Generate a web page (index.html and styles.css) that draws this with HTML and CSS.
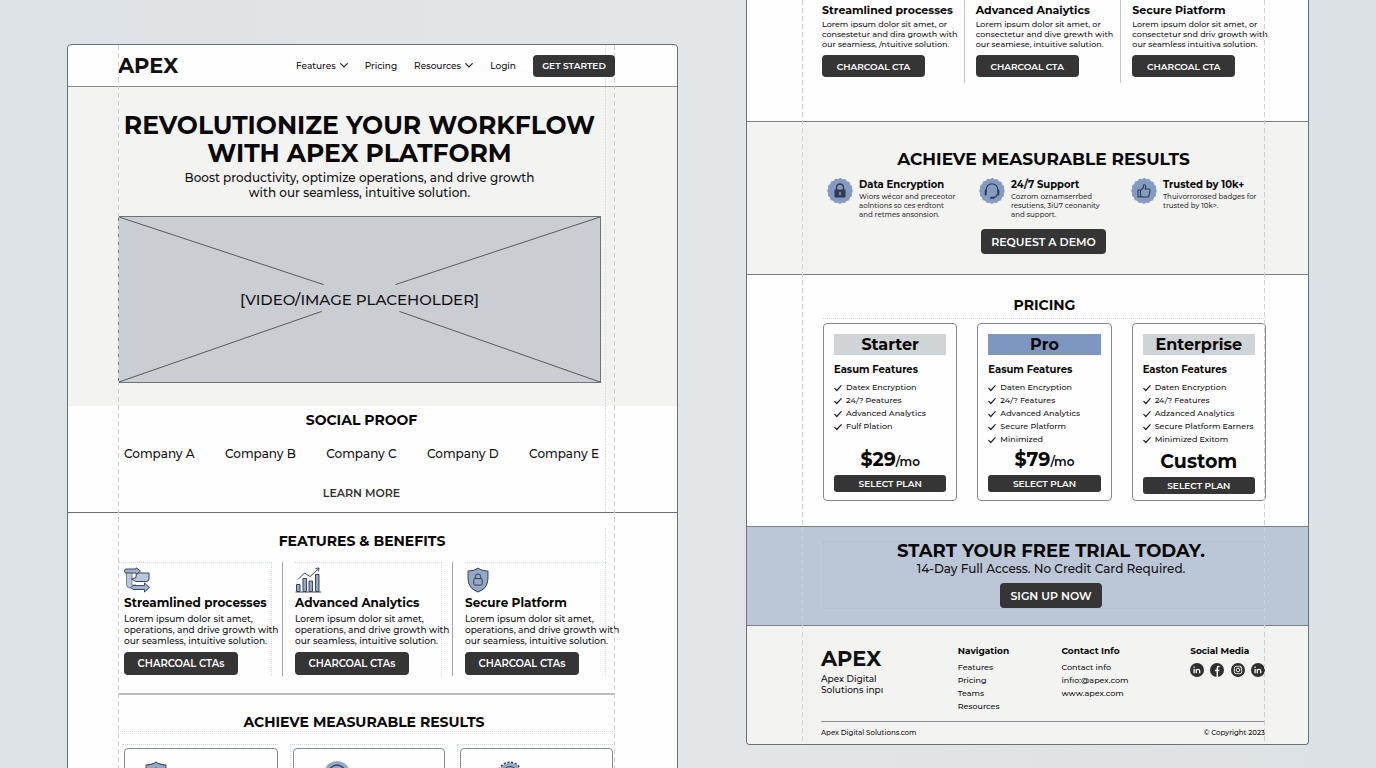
FILE: index.html
```html
<!DOCTYPE html>
<html lang="en">
<head>
    <meta charset="UTF-8">
    <meta name="viewport" content="width=device-width, initial-scale=1.0">
    <title>Apex Platform</title>
    <link rel="stylesheet" href="styles.css">
</head>
<body>
    <!-- Shared icon shapes -->
    <svg class="sprite" aria-hidden="true">
        <symbol id="chevron" viewBox="0 0 8 5"><path d="M.7.7 4 4 7.3.7" fill="none" stroke="#222" stroke-width="1.2" stroke-linecap="round"/></symbol>
        <symbol id="check" viewBox="0 0 8 8"><path d="M.8 4.4 2.8 6.5 7.2 1.6" fill="none" stroke="#222" stroke-width="1.2" stroke-linecap="round"/></symbol>
        <symbol id="badge" viewBox="0 0 26 26">
            <circle cx="13" cy="13" r="12" fill="#849bc2"/>
            <circle cx="13" cy="13" r="10.8" fill="none" stroke="#849bc2" stroke-width="4.200" stroke-linecap="round" stroke-dasharray="0 4.24"/>
        </symbol>
        <symbol id="shield" viewBox="0 0 24 28">
            <path d="M12 1.2C9 3.4 5.500 4.300 1.300 4.300V12.500C1.300 19.500 5 24.500 12 27 19 24.500 22.700 19.500 22.700 12.500V4.300C18.500 4.300 15 3.400 12 1.200Z" fill="#94a9ca" stroke="#3c4758" stroke-width="1.1"/>
            <rect x="7.500" y="12.500" width="9" height="7" rx="1" fill="none" stroke="#2c3544" stroke-width="1"/>
            <path d="M9 12.500V10.500a3 3 0 0 1 6 0V12.500" fill="none" stroke="#2c3544" stroke-width="1"/>
        </symbol>
        <symbol id="linkedin" viewBox="0 0 14 14">
            <circle cx="7" cy="7" r="7" fill="#2f2f2f"/>
            <path d="M4.100 6v4.200M6.300 6v4.200M6.300 8q0-1.700 1.700-1.700t1.700 1.700v2.200" fill="none" stroke="#fff" stroke-width="1.300"/>
            <circle cx="4.100" cy="4.200" r=".8" fill="#fff"/>
        </symbol>
    </svg>

    <div class="board">
        <!-- First page -->
        <div class="page page-left">
            <div class="guide guide-start"></div>
            <div class="guide guide-inner"></div>
            <div class="guide guide-inner guide-inner-low"></div>
            <div class="guide guide-end"></div>

            <header class="header">
                <a class="logo" href="#">APEX</a>
                <nav class="nav">
                    <a href="#">Features <svg class="chevron"><use href="#chevron"/></svg></a>
                    <a href="#">Pricing</a>
                    <a href="#">Resources <svg class="chevron"><use href="#chevron"/></svg></a>
                    <a href="#">Login</a>
                    <button class="btn btn-nav">GET STARTED</button>
                </nav>
            </header>

            <section class="hero">
                <h1>REVOLUTIONIZE YOUR WORKFLOW<br>WITH APEX PLATFORM</h1>
                <p>Boost productivity, optimize operations, and drive growth<br>with our seamless, intuitive solution.</p>
                <div class="placeholder">
                    <svg viewBox="0 0 482 166" preserveAspectRatio="none" aria-hidden="true">
                        <path d="M0 0 205 68M277 68 482 0M0 166 203 95M281 95 482 166" fill="none" stroke="#55595d" stroke-width="1"/>
                    </svg>
                    <span>[VIDEO/IMAGE PLACEHOLDER]</span>
                </div>
            </section>

            <section class="proof">
                <h2>SOCIAL PROOF</h2>
                <div class="companies">
                    <span>Company A</span>
                    <span>Company B</span>
                    <span>Company C</span>
                    <span>Company D</span>
                    <span>Company E</span>
                </div>
                <a class="learn-more" href="#">LEARN MORE</a>
            </section>

            <section class="features">
                <h2>FEATURES &amp; BENEFITS</h2>
                <div class="feature-row">
                    <div class="feature">
                        <div class="feature-body">
                            <svg class="feature-icon" viewBox="0 0 26 26" aria-hidden="true">
                                <g fill="#9fb2cf" stroke="#3c4758" stroke-width="1" stroke-linejoin="round">
                                    <path d="M2.500 5H8V18H12V21H6Q2.500 21 2.500 17V5Z" fill="#b9c6db" stroke-width=".6"/>
                                    <path d="M2 2H12V.800L16.500 4 12 7.500V6H2Q.500 6 .500 4T2 2Z"/>
                                    <path d="M25 6H15Q12 6 12 9V10.500L7.500 12 12 14.500H22Q25 14.500 25 12Z" fill="#b9c6db"/>
                                    <path d="M9 18.500H20.500V16L25.500 20.500 20.500 25V22.500H9L7 20.500Z"/>
                                </g>
                            </svg>
                            <h3>Streamlined processes</h3>
                            <p>Lorem ipsum dolor sit amet,<br>operations, and drive growth with<br>our seamless, intuitive solution.</p>
                            <button class="btn btn-card">CHARCOAL CTAs</button>
                        </div>
                    </div>
                    <div class="feature">
                        <div class="feature-body">
                            <svg class="feature-icon" viewBox="0 0 26 26" aria-hidden="true">
                                <path d="M1.500 17.500H5V24.500H1.500ZM8 11.500H11.500V24.500H8ZM14 14H17.500V24.500H14ZM20.500 7.500H24V24.500H20.500Z" fill="#94a9ca" stroke="#3c4758"/>
                                <path d="M.500 25H26M3 12.500 9.500 6 15 9.500 23.500 1.800M20.500 1.500 24 1 23.500 4.500" fill="none" stroke="#3c4758"/>
                            </svg>
                            <h3>Advanced Analytics</h3>
                            <p>Lorem ipsum dolor sit amet,<br>operations, and drive growth with<br>our seamless, intuitive solution.</p>
                            <button class="btn btn-card">CHARCOAL CTAs</button>
                        </div>
                    </div>
                    <div class="feature">
                        <div class="feature-body">
                            <svg class="feature-icon" aria-hidden="true"><use href="#shield"/></svg>
                            <h3>Secure Platform</h3>
                            <p>Lorem ipsum dolor sit amet,<br>operations, and drive growth with<br>our seamiess, intuitive solution.</p>
                            <button class="btn btn-card">CHARCOAL CTAs</button>
                        </div>
                    </div>
                </div>
            </section>

            <section class="results-preview">
                <h2>ACHIEVE MEASURABLE RESULTS</h2>
                <div class="preview-row">
                    <div class="preview-cell">
                        <div class="preview-card"><svg class="preview-icon" aria-hidden="true"><use href="#shield"/></svg></div>
                    </div>
                    <div class="preview-cell">
                        <div class="preview-card preview-card-mid">
                            <svg class="preview-icon" viewBox="0 0 26 26" aria-hidden="true">
                                <circle cx="13" cy="13" r="13" fill="#94a9ca"/>
                                <path d="M5 14V12a8 8 0 0 1 16 0v2" fill="none" stroke="#3c4758" stroke-width="1.500"/>
                            </svg>
                        </div>
                    </div>
                    <div class="preview-cell">
                        <div class="preview-card preview-card-end">
                            <svg class="preview-icon" viewBox="0 0 26 26" aria-hidden="true">
                                <circle cx="13" cy="13" r="11" fill="#94a9ca" stroke="#3c4758" stroke-width="3" stroke-dasharray="2 1.500"/>
                                <circle cx="13" cy="13" r="11" fill="#94a9ca"/>
                                <circle cx="13" cy="13" r="7.500" fill="none" stroke="#3c4758"/>
                            </svg>
                        </div>
                    </div>
                </div>
            </section>
        </div>

        <!-- Second page -->
        <div class="page page-right">
            <div class="guide guide-start"></div>
            <div class="guide guide-end"></div>

            <section class="columns">
                <div class="column">
                    <h3>Streamlined processes</h3>
                    <p>Lorem ipsum dolor sit amet, or<br>consestetur and dira growth with<br>our seamiess, /ntuitive solution.</p>
                    <button class="btn btn-column">CHARCOAL CTA</button>
                </div>
                <div class="column">
                    <h3>Advanced Anaiytics</h3>
                    <p>Lorem ipsum dolor sit amet, or<br>consectetur and dive grewth with<br>our seamiese, intuitive salution.</p>
                    <button class="btn btn-column">CHARCOAL CTA</button>
                </div>
                <div class="column">
                    <h3>Secure Piatform</h3>
                    <p>Lorem ipsum dolor sit amet, or<br>consectetur snd driv growth with<br>our seamless intuitiva solution.</p>
                    <button class="btn btn-column">CHARCOAL CTA</button>
                </div>
            </section>

            <section class="results">
                <h2>ACHIEVE MEASURABLE RESULTS</h2>
                <div class="result-row">
                    <div class="result">
                        <svg class="badge" viewBox="0 0 26 26" aria-hidden="true">
                            <use href="#badge"/>
                            <rect x="7.500" y="11.500" width="11" height="8" rx="1" fill="#303a4c"/>
                            <path d="M9.500 12V9.500a3.500 3.500 0 0 1 7 0V12" fill="none" stroke="#303a4c" stroke-width="1.400"/>
                            <path d="M13 14v3" stroke="#a9b9d4" stroke-width="1.200"/>
                        </svg>
                        <div>
                            <h3>Data Encryption</h3>
                            <p>Wiors wécor and preceotor<br>aolntions so ces erdtont<br>and retmes ansonsion.</p>
                        </div>
                    </div>
                    <div class="result">
                        <svg class="badge" viewBox="0 0 26 26" aria-hidden="true">
                            <use href="#badge"/>
                            <path d="M7.300 13.500V11.500a5.700 5.700 0 0 1 11.400 0v2M18.500 16q-1 3.300-4.500 3.600" fill="none" stroke="#303a4c" stroke-width="1.100"/>
                            <path d="M6.700 12.500v4M19.300 12.500v4M12 19.800h3" fill="none" stroke="#303a4c" stroke-width="2" stroke-linecap="round"/>
                        </svg>
                        <div>
                            <h3>24/7 Support</h3>
                            <p>Cozrom oznamserrbed<br>resutiens, 3iU7 ceonanity<br>and support.</p>
                        </div>
                    </div>
                    <div class="result">
                        <svg class="badge" viewBox="0 0 26 26" aria-hidden="true">
                            <use href="#badge"/>
                            <path d="M7 12h2.500v7H7ZM9.500 12.500 12.500 9.500V7q1.800-.700 2.300 1.200L14.200 11H18q1.300.200 1 1.600l-1 5q-.300 1.400-1.500 1.400h-5l-2-.800" fill="none" stroke="#303a4c" stroke-width="1.100" stroke-linejoin="round"/>
                        </svg>
                        <div>
                            <h3>Trusted by 10k+</h3>
                            <p>Thuivorrorosed badges for<br>trusted by 10k&gt;.</p>
                        </div>
                    </div>
                </div>
                <button class="btn btn-large">REQUEST A DEMO</button>
            </section>

            <section class="pricing">
                <h2>PRICING</h2>
                <div class="plans">
                    <div class="plan">
                        <h3>Starter</h3>
                        <h4>Easum Features</h4>
                        <ul>
                            <li><svg><use href="#check"/></svg>Datex Encryption</li>
                            <li><svg><use href="#check"/></svg>24/? Peatures</li>
                            <li><svg><use href="#check"/></svg>Advanced Analytics</li>
                            <li><svg><use href="#check"/></svg>Fulf Plation</li>
                        </ul>
                        <div class="price">$29<small>/mo</small></div>
                        <button class="btn btn-plan">SELECT PLAN</button>
                    </div>
                    <div class="plan plan-pro">
                        <h3>Pro</h3>
                        <h4>Easum Features</h4>
                        <ul>
                            <li><svg><use href="#check"/></svg>Daten Encryption</li>
                            <li><svg><use href="#check"/></svg>24/? Features</li>
                            <li><svg><use href="#check"/></svg>Advanced Analytics</li>
                            <li><svg><use href="#check"/></svg>Secure Platform</li>
                            <li><svg><use href="#check"/></svg>Minimized</li>
                        </ul>
                        <div class="price">$79<small>/mo</small></div>
                        <button class="btn btn-plan">SELECT PLAN</button>
                    </div>
                    <div class="plan plan-custom">
                        <h3>Enterprise</h3>
                        <h4>Easton Features</h4>
                        <ul>
                            <li><svg><use href="#check"/></svg>Daten Encryption</li>
                            <li><svg><use href="#check"/></svg>24/? Features</li>
                            <li><svg><use href="#check"/></svg>Adzanced Analytics</li>
                            <li><svg><use href="#check"/></svg>Secure Platform Earners</li>
                            <li><svg><use href="#check"/></svg>Minimized Exitom</li>
                        </ul>
                        <div class="price">Custom</div>
                        <button class="btn btn-plan">SELECT PLAN</button>
                    </div>
                </div>
            </section>

            <section class="trial">
                <div class="trial-box">
                    <h2>START YOUR FREE TRIAL TODAY.</h2>
                    <p>14-Day Full Access. No Credit Card Required.</p>
                    <button class="btn btn-large">SIGN UP NOW</button>
                </div>
            </section>

            <footer class="footer">
                <div class="footer-row">
                    <div>
                        <a class="logo" href="#">APEX</a>
                        <p>Apex Digital<br>Solutions inpı</p>
                    </div>
                    <div class="footer-links">
                        <h4>Navigation</h4>
                        <a href="#">Features</a>
                        <a href="#">Pricing</a>
                        <a href="#">Teams</a>
                        <a href="#">Resources</a>
                    </div>
                    <div class="footer-links">
                        <h4>Contact Info</h4>
                        <a href="#">Contact info</a>
                        <a href="#">infıo:@apex.com</a>
                        <a href="#">www.apex.com</a>
                    </div>
                    <div>
                        <h4>Social Media</h4>
                        <div class="social">
                            <a href="#" aria-label="LinkedIn"><svg><use href="#linkedin"/></svg></a>
                            <a href="#" aria-label="Facebook">
                                <svg viewBox="0 0 14 14"><circle cx="7" cy="7" r="7" fill="#2f2f2f"/><path d="M9.500 3.500H8.700Q7.300 3.500 7.300 5V14M5 7.500H9.300" fill="none" stroke="#fff" stroke-width="1.500"/></svg>
                            </a>
                            <a href="#" aria-label="Instagram">
                                <svg viewBox="0 0 14 14"><circle cx="7" cy="7" r="7" fill="#2f2f2f"/><rect x="3.300" y="3.300" width="7.400" height="7.400" rx="2" fill="none" stroke="#fff" stroke-width=".9"/><circle cx="7" cy="7" r="1.800" fill="none" stroke="#fff" stroke-width=".9"/><circle cx="9.200" cy="4.800" r=".5" fill="#fff"/></svg>
                            </a>
                            <a href="#" aria-label="LinkedIn"><svg><use href="#linkedin"/></svg></a>
                        </div>
                    </div>
                </div>
                <div class="footer-bottom">
                    <span>Apex Digital Solutions.com</span>
                    <span>© Copyright 2023</span>
                </div>
            </footer>
        </div>
    </div>
</body>
</html>
```
FILE: styles.css
```css
* {
    box-sizing: border-box;
}

body {
    margin: 0;
    font-family: Montserrat, Inter, "Open Sans", sans-serif;
    font-weight: 500;
    color: #111;
    background: linear-gradient(90deg, #dde2e6, #e2e6e9 50%, #dce1e5);
}

h1, h2, h3, h4, p, ul {
    margin: 0;
    padding: 0;
}

h1, h2, h3, h4 {
    font-weight: 700;
    color: #080808;
}

a {
    color: inherit;
    text-decoration: none;
}

svg {
    display: block;
}

.sprite {
    position: absolute;
    width: 0;
    height: 0;
}

.board {
    display: grid;
    grid-template-columns: minmax(0, 611fr) minmax(0, 563fr);
    gap: 68px;
    align-items: start;
    height: 100vh;
    padding: 0 67px;
    overflow: hidden;
}

.page {
    position: relative;
    background: #fefefe;
    border: 1px solid #6b7076;
    border-radius: 4px;
}

.page-left {
    margin-top: 44px;
}

.page-right {
    border-top: none;
    border-radius: 0 0 4px 4px;
}

.btn {
    position: relative;
    z-index: 1;
    display: block;
    padding: 0;
    border: none;
    border-radius: 4px;
    background: #353535;
    color: #fff;
    font-family: inherit;
    font-weight: 600;
    white-space: nowrap;
    cursor: pointer;
}

.btn:hover {
    background: #4a4a4a;
}

.logo {
    font-weight: 700;
    font-size: 21px;
    line-height: 26px;
}

/* Layout guides drawn over the pages */
.guide {
    position: absolute;
    top: 0;
    bottom: 0;
    width: 1px;
    background: repeating-linear-gradient(#cfd1d3 0 5px, transparent 5px 8px);
    pointer-events: none;
}

.page-left .guide-start { left: 50px; }
.page-left .guide-end { right: 62px; }
.page-right .guide-start { left: 55px; }
.page-right .guide-end { right: 43px; }

.page .guide-inner {
    right: 71px;
    bottom: auto;
    height: 467px;
    background: repeating-linear-gradient(#d3dce9 0 2px, transparent 2px 3px);
}

.page .guide-inner-low {
    top: 483px;
    height: 35px;
}

/* Header */
.header {
    display: flex;
    justify-content: space-between;
    align-items: center;
    height: 42px;
    padding: 0 62px 0 50px;
    border-bottom: 1px solid #8b8f93;
}

.nav {
    display: flex;
    align-items: center;
    gap: 17px;
    font-size: 9px;
}

.nav a {
    display: flex;
    align-items: center;
    gap: 4px;
}

.chevron {
    width: 8px;
    height: 5px;
}

.btn-nav {
    width: 82px;
    height: 22px;
    font-size: 9px;
}

/* Hero */
.hero {
    padding: 24px 76px 23px 50px;
    background: #f3f3f2;
    text-align: center;
}

.hero h1 {
    font-size: 25px;
    line-height: 28px;
    white-space: nowrap;
}

.hero p {
    margin: 3px 0 16px;
    font-size: 12px;
    line-height: 15px;
}

.placeholder {
    display: grid;
    height: 167px;
    border: 1px solid #6d7276;
    background: #cacdd1;
    font-size: 15px;
}

.placeholder svg,
.placeholder span {
    grid-area: 1 / 1;
    place-self: center;
}

.placeholder svg {
    width: 100%;
    height: 165px;
}

/* Social proof */
.proof {
    padding: 5px 72px 11px 50px;
    border-bottom: 1px solid #6b7076;
    text-align: center;
}

.page-left h2 {
    font-size: 14px;
    line-height: 18px;
}

.companies {
    display: flex;
    justify-content: space-between;
    padding: 16px 6px 18px;
    font-size: 12px;
    line-height: 18px;
}

.learn-more {
    display: block;
    margin-top: 4px;
    color: #333;
    font-size: 11px;
    font-weight: 600;
    line-height: 16px;
}

/* Features */
.features {
    margin: 0 62px 0 50px;
    padding: 19px 9px 17px 0;
    border-bottom: 2px solid #b9bbbd;
}

.features h2 {
    text-align: center;
}

.feature-row {
    display: grid;
    grid-template-columns: minmax(0, 164fr) minmax(0, 170fr) minmax(0, 154fr);
    margin-top: 12px;
}

.feature {
    padding: 0 10px 0 12px;
    border-left: 1px solid #a2a5a8;
}

.feature:first-child {
    padding-left: 0;
    border-left: none;
}

.feature:first-child .feature-body {
    padding-left: 6px;
}

.feature:last-child {
    padding-right: 0;
}

.feature-body {
    padding: 4px 0 1px;
    border-top: 1px dotted #ccd8e2;
    border-right: 1px dotted #ccd8e2;
    white-space: nowrap;
}

.feature-icon {
    width: 26px;
    height: 26px;
}

.feature h3 {
    margin-top: 2px;
    font-size: 12px;
    line-height: 16px;
}

.feature p {
    margin: 2px 0 6px;
    font-size: 9px;
    line-height: 11px;
}

.btn-card {
    width: 114px;
    height: 23px;
    font-size: 10px;
}

/* Results preview */
.results-preview {
    margin: 0 62px 0 50px;
    padding-top: 18px;
}

.results-preview h2 {
    padding-right: 5px;
    border-bottom: 1px dotted #ccd8e2;
    text-align: center;
}

.preview-row {
    display: grid;
    grid-template-columns: repeat(3, 1fr);
    gap: 12px;
    padding: 12px 2px 0 4px;
}

.preview-cell {
    padding: 3px 0 0 2px;
    border-top: 1px dotted #ccd8e2;
}

.preview-cell + .preview-cell {
    border-left: 1px dotted #ccd8e2;
}

.preview-card {
    padding: 12px 18px;
    border: 1px solid #85898d;
    border-radius: 4px;
}

.preview-card-mid {
    padding-left: 30px;
}

.preview-card-end {
    padding-left: 36px;
}

.preview-icon {
    width: 26px;
    height: 26px;
}

/* Text columns at the top of the second page */
.columns {
    display: grid;
    grid-template-columns: minmax(0, 142fr) minmax(0, 157fr) minmax(0, 145fr);
    padding: 0 43px 38px 75px;
    border-bottom: 1px solid #7b8085;
    white-space: nowrap;
}

.column {
    padding: 2px 0 6px 11px;
    border-left: 1px solid #c3c6c9;
}

.column:first-child {
    padding-left: 0;
    border-left: none;
}

.column h3 {
    font-size: 11px;
    line-height: 16px;
}

.column p {
    margin: 1px 0 6px;
    font-size: 8px;
    line-height: 10px;
}

.btn-column {
    width: 103px;
    height: 22px;
    font-size: 9px;
}

/* Results */
.results {
    padding: 26px 43px 20px 75px;
    border-bottom: 1px solid #7b8085;
    background: #f3f3f2;
}

.results h2 {
    font-size: 17px;
    line-height: 22px;
    text-align: center;
}

.result-row {
    display: grid;
    grid-template-columns: repeat(3, minmax(0, 1fr));
    gap: 18px;
    padding: 8px 0 10px 5px;
    white-space: nowrap;
}

.result {
    display: flex;
    gap: 6px;
}

.badge {
    flex: none;
    width: 26px;
    height: 26px;
}

.result h3 {
    font-size: 10px;
    line-height: 14px;
}

.result p {
    color: #333;
    font-size: 7px;
    line-height: 9px;
}

.btn-large {
    height: 25px;
    margin: 0 auto;
    padding: 0 10px;
    font-size: 11px;
}

/* Pricing */
.pricing {
    padding: 20px 42px 25px 76px;
    border-bottom: 1px solid #7b8085;
}

.pricing h2 {
    padding-bottom: 3px;
    border-bottom: 1px dotted #ccd8e2;
    font-size: 14px;
    line-height: 20px;
    text-align: center;
}

.plans {
    display: grid;
    grid-template-columns: repeat(3, minmax(0, 1fr));
    gap: 20px;
    margin-top: 4px;
}

.plan {
    display: flex;
    flex-direction: column;
    padding: 10px 10px 8px;
    border: 1px solid #85898d;
    border-radius: 4px;
    white-space: nowrap;
}

.plan h3 {
    background: #d0d4d7;
    font-size: 16px;
    line-height: 21px;
    text-align: center;
}

.plan-pro h3 {
    background: #7d97c0;
}

.plan h4 {
    margin: 8px 0 4px;
    font-size: 10px;
    line-height: 14px;
}

.plan li {
    display: flex;
    align-items: center;
    gap: 4px;
    font-size: 8px;
    line-height: 13px;
}

.plan li svg {
    width: 8px;
    height: 8px;
}

.price {
    margin-top: auto;
    color: #080808;
    font-size: 19px;
    font-weight: 700;
    line-height: 26px;
    text-align: center;
}

.price small {
    font-size: 12px;
    font-weight: 600;
}

.plan-custom {
    padding-bottom: 6px;
}

.plan-custom .price {
    line-height: 31px;
}

.btn-plan {
    height: 17px;
    border-radius: 3px;
    font-size: 9px;
}

/* Free trial */
.trial {
    padding: 14px 43px 16px 76px;
    border-bottom: 1px solid #7b8085;
    background: #bbc6d6;
    text-align: center;
}

.trial-box {
    padding-left: 14px;
    border: 1px dotted #aebcd2;
}

.trial h2 {
    font-size: 18px;
    line-height: 18px;
}

.trial p {
    margin-bottom: 5px;
    font-size: 12px;
    line-height: 18px;
}

/* Footer */
.footer {
    padding: 18px 43px 5px 74px;
    border-radius: 0 0 4px 4px;
    background: #f3f3f2;
}

.footer-row {
    display: grid;
    grid-template-columns: minmax(0, 137fr) minmax(0, 104fr) minmax(0, 129fr) minmax(0, 75fr);
    padding-bottom: 8px;
    border-bottom: 1px solid #8b8f93;
    font-size: 9px;
    line-height: 11px;
    white-space: nowrap;
}

.footer .logo {
    line-height: 29px;
}

.footer h4 {
    margin-bottom: 3px;
    font-size: 9px;
    line-height: 14px;
}

.footer-links a {
    display: block;
    font-size: 8px;
    line-height: 13px;
}

.social {
    display: flex;
    justify-content: space-between;
    padding-top: 2px;
}

.social svg {
    width: 14px;
    height: 14px;
}

.footer-bottom {
    display: flex;
    justify-content: space-between;
    padding-top: 5px;
    font-size: 7px;
    line-height: 12px;
}
```
